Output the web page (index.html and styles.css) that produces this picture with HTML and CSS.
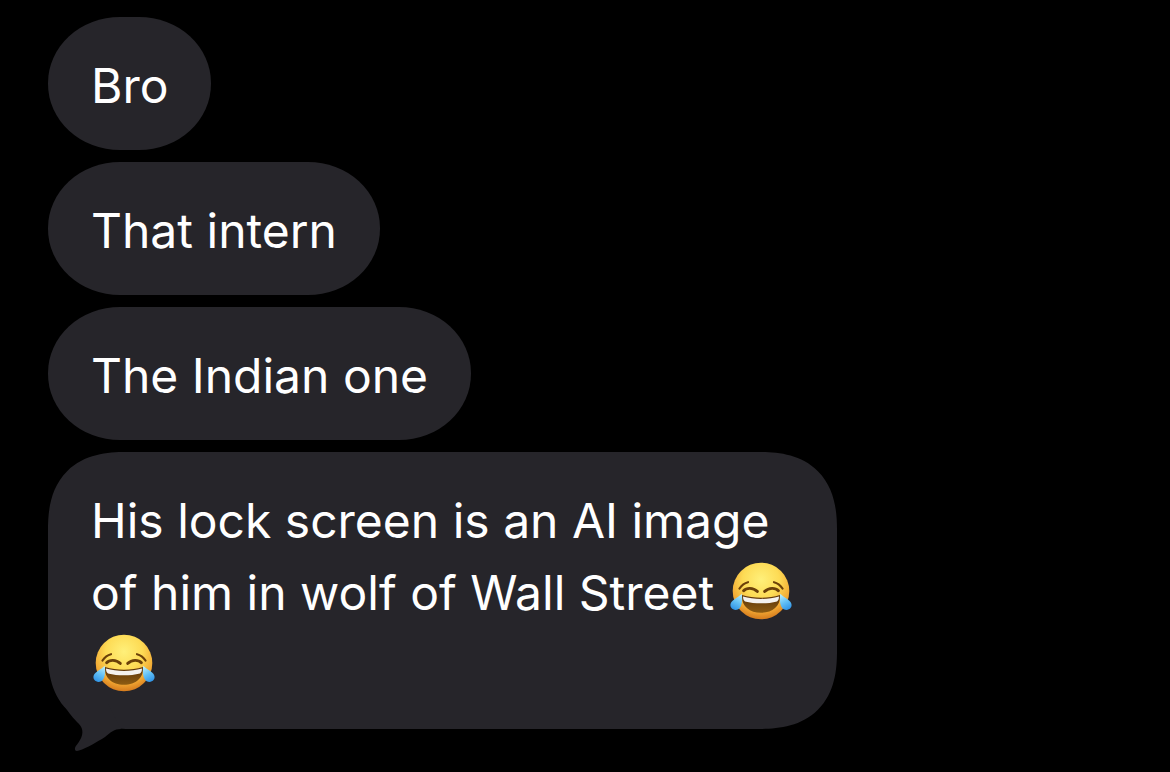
FILE: index.html
```html
<!DOCTYPE html>
<html lang="en">
<head>
    <meta charset="utf-8">
    <meta name="viewport" content="width=device-width, initial-scale=1.0">
    <title>Messages</title>
    <link rel="stylesheet" href="styles.css">
</head>
<body>
<svg class="defs" width="0" height="0" aria-hidden="true">
    <defs>
        <radialGradient id="face" cx="0.5" cy="0.3" r="0.72">
            <stop offset="0" stop-color="#fff07a"/>
            <stop offset="0.45" stop-color="#fddb55"/>
            <stop offset="0.78" stop-color="#f2a833"/>
            <stop offset="1" stop-color="#d0741a"/>
        </radialGradient>
        <linearGradient id="mouth" x1="0" y1="0" x2="0" y2="1">
            <stop offset="0" stop-color="#5a3209"/>
            <stop offset="1" stop-color="#8d5c12"/>
        </linearGradient>
        <linearGradient id="tear" x1="0.7" y1="0" x2="0.3" y2="1">
            <stop offset="0" stop-color="#b5ecfb"/>
            <stop offset="0.5" stop-color="#62c0f5"/>
            <stop offset="1" stop-color="#2f93e6"/>
        </linearGradient>
        <symbol id="joy" viewBox="0 0 62 58">
            <circle cx="31" cy="29" r="28.3" fill="url(#face)"/>
            <g fill="none" stroke="#6b4009" stroke-linecap="round">
                <path stroke-width="2.2" d="M9.5 26.5C11.5 23.5 14.5 21 18 20.2M52.5 26.5C50.5 23.5 47.5 21 44 20.2"/>
                <path stroke-width="2.9" d="M13.6 28.8C16.5 25.6 23 25.4 27.3 29.4M48.4 28.8C45.5 25.6 39 25.4 34.7 29.4"/>
            </g>
            <path fill="url(#mouth)" d="M12 33C24 36.6 38 36.6 50 33C51 43.5 43 50.8 31 50.8S11 43.500 12 33Z"/>
            <path fill="#f4f1ee" d="M13 34.500C24 37.700 38 37.700 49 34.500C49 36.800 48.500 38.400 47 39.400C37 42 25 42 15 39.400C13.500 38.400 13 36.800 13 34.500Z"/>
            <path id="drop" fill="url(#tear)" d="M11.800 31.800C12.500 37 12.200 42 10.300 45.200C8.300 48.600 3.500 48.800 1.300 45.800C-.8 42.500 1 39.500 4.200 37.500C7 35.700 9.500 34 11.800 31.800Z"/>
            <use href="#drop" transform="matrix(-1 0 0 1 62 0)"/>
        </symbol>
    </defs>
</svg>
<main class="chat">
    <p class="bubble">Bro</p>
    <p class="bubble">That intern</p>
    <p class="bubble">The Indian one</p>
    <p class="bubble bubble-last">His lock screen is an AI image of him in wolf of Wall Street <svg class="emoji" role="img" aria-label="face with tears of joy"><use href="#joy"/></svg><wbr><svg class="emoji" role="img" aria-label="face with tears of joy"><use href="#joy"/></svg>
        <svg class="tail" viewBox="0 0 60 48" aria-hidden="true"><path d="M15 0C19 6 23 12 29 18C35 23 36 29 32 36C30 40 28 41 27 44C26.500 46.500 28 47.500 31 46.500C39 44 49 38 57 33C63 28 66 25 73 25L60 0Z"/></svg>
    </p>
</main>
</body>
</html>
```
FILE: styles.css
```css
* {
    margin: 0;
    padding: 0;
    box-sizing: border-box;
}
body {
    background-color: #000;
    color: #fff;
    font-family: Inter, "Liberation Sans", sans-serif;
    font-size: 48px;
    line-height: 72px;
}
.defs {
    position: absolute;
}
.chat {
    display: flex;
    flex-direction: column;
    align-items: flex-start;
    gap: 12px;
    padding: 17px 48px 43px;
}
.bubble {
    padding: 33px 43px 28px;
    background-color: #26252a;
    border-radius: 72px / 66px;
}
.bubble-last {
    position: relative;
    max-width: 789px;
    padding-right: 40px;
    border-radius: 64px;
}
/* smoother corners where the browser has them */
@supports (corner-shape: superellipse(1.3)) {
    .bubble-last {
        border-radius: 78px;
        corner-shape: superellipse(1.3);
    }
}
.emoji {
    width: 62px;
    height: 58px;
    margin: 0 2px;
    vertical-align: -10px;
}
.tail {
    position: absolute;
    left: 0;
    bottom: -23px;
    width: 60px;
    height: 48px;
    overflow: visible;
    fill: #26252a;
}
```
